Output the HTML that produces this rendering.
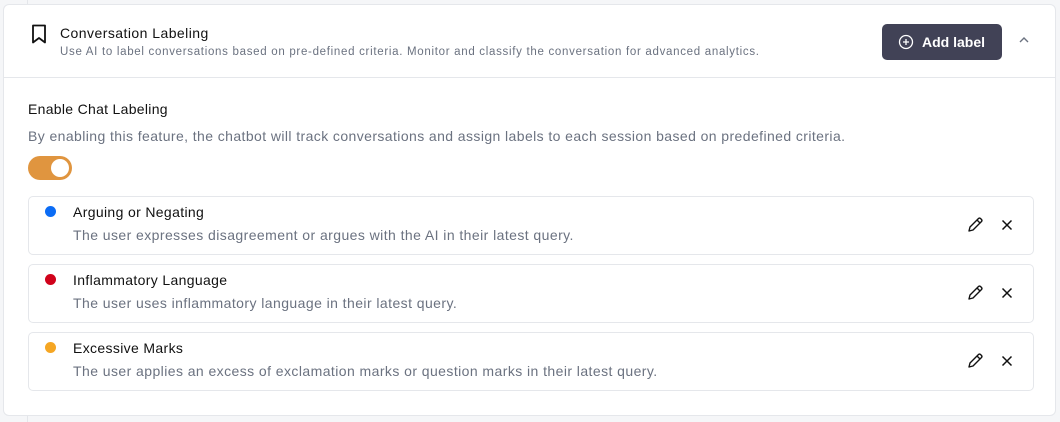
<!DOCTYPE html>
<html><head><meta charset="utf-8"><style>
*{box-sizing:border-box;margin:0;padding:0}
body{width:1060px;height:422px;background:#f5f6f8;font-family:"Liberation Sans",sans-serif;position:relative;overflow:hidden}
.vl{position:absolute;left:27px;top:0;width:1px;height:422px;background:#e4e6ea}
.card{position:absolute;left:3px;top:4px;width:1053px;height:412px;background:#fff;border:1px solid #e5e7eb;border-radius:6px}
.hdr{position:absolute;left:0;top:0;width:100%;height:73px;border-bottom:1px solid #e5e7eb}
.t1{position:absolute;left:56px;top:20px;font-size:14px;color:#111;letter-spacing:0.45px}
.t2{position:absolute;left:56px;top:41px;font-size:11.5px;color:#6b7280;letter-spacing:0.7px}
.btn{position:absolute;left:878px;top:19px;width:120px;height:36px;background:#414256;border-radius:5px;color:#fff;font-weight:bold;font-size:14px;line-height:36px;padding-left:40px}
.btn svg{position:absolute;left:16px;top:10px}
.chev{position:absolute;left:1014px;top:31px}
.e1{position:absolute;left:24px;top:96px;font-size:14px;color:#111;letter-spacing:0.3px}
.e2{position:absolute;left:24px;top:123px;font-size:14px;color:#6b7280;letter-spacing:0.41px}
.tog{position:absolute;left:24px;top:151px;width:44px;height:24px;border-radius:12px;background:#e0953f}
.tog:after{content:"";position:absolute;right:3px;top:3px;width:18px;height:18px;border-radius:50%;background:#fff}
.item{position:absolute;left:24px;width:1006px;height:59px;border:1px solid #e5e7eb;border-radius:5px}
.dot{position:absolute;left:16px;top:9px;width:11px;height:11px;border-radius:50%}
.it{position:absolute;left:44px;top:7px;font-size:14px;color:#111;letter-spacing:0.35px}
.id{position:absolute;left:44px;top:30px;font-size:14px;color:#6b7280;letter-spacing:0.43px}
.ic{position:absolute;top:19px}
</style></head><body>
<div class="vl"></div>
<div class="card">
 <div class="hdr">
  <svg style="position:absolute;left:27px;top:19px" width="16" height="20" viewBox="0 0 16 20"><path d="M2 1.5h12v17l-6-4.5-6 4.5z" fill="none" stroke="#111" stroke-width="1.8" stroke-linejoin="round"/></svg>
  <div class="t1">Conversation Labeling</div>
  <div class="t2">Use AI to label conversations based on pre-defined criteria. Monitor and classify the conversation for advanced analytics.</div>
  <div class="btn"><svg width="16" height="16" viewBox="0 0 16 16"><circle cx="8" cy="8" r="6.5" fill="none" stroke="#fff" stroke-width="1.3"/><path d="M8 5v6M5 8h6" stroke="#fff" stroke-width="1.3"/></svg>Add label</div>
  <svg class="chev" width="12" height="8" viewBox="0 0 12 8"><path d="M2 6l4-4 4 4" fill="none" stroke="#6b7280" stroke-width="1.4"/></svg>
 </div>
 <div class="e1">Enable Chat Labeling</div>
 <div class="e2">By enabling this feature, the chatbot will track conversations and assign labels to each session based on predefined criteria.</div>
 <div class="tog"></div>
 <div class="item" style="top:191px"><div class="dot" style="background:#0b6cf5"></div><div class="it">Arguing or Negating</div><div class="id">The user expresses disagreement or argues with the AI in their latest query.</div>
  <svg class="ic" style="left:937px" width="18" height="18" viewBox="0 0 18 18"><path d="M3 15l1-4L12.5 2.5a1.5 1.5 0 0 1 2 0l1 1a1.5 1.5 0 0 1 0 2L7 14z M11 4l3 3" fill="none" stroke="#111" stroke-width="1.4" stroke-linejoin="round"/></svg>
  <svg class="ic" style="left:969px" width="18" height="18" viewBox="0 0 18 18"><path d="M4.5 4.5l9 9M13.5 4.5l-9 9" stroke="#111" stroke-width="1.5"/></svg></div>
 <div class="item" style="top:259px"><div class="dot" style="background:#d0021b"></div><div class="it">Inflammatory Language</div><div class="id">The user uses inflammatory language in their latest query.</div>
  <svg class="ic" style="left:937px" width="18" height="18" viewBox="0 0 18 18"><path d="M3 15l1-4L12.5 2.5a1.5 1.5 0 0 1 2 0l1 1a1.5 1.5 0 0 1 0 2L7 14z M11 4l3 3" fill="none" stroke="#111" stroke-width="1.4" stroke-linejoin="round"/></svg>
  <svg class="ic" style="left:969px" width="18" height="18" viewBox="0 0 18 18"><path d="M4.5 4.5l9 9M13.5 4.5l-9 9" stroke="#111" stroke-width="1.5"/></svg></div>
 <div class="item" style="top:327px"><div class="dot" style="background:#f5a623"></div><div class="it">Excessive Marks</div><div class="id">The user applies an excess of exclamation marks or question marks in their latest query.</div>
  <svg class="ic" style="left:937px" width="18" height="18" viewBox="0 0 18 18"><path d="M3 15l1-4L12.5 2.5a1.5 1.5 0 0 1 2 0l1 1a1.5 1.5 0 0 1 0 2L7 14z M11 4l3 3" fill="none" stroke="#111" stroke-width="1.4" stroke-linejoin="round"/></svg>
  <svg class="ic" style="left:969px" width="18" height="18" viewBox="0 0 18 18"><path d="M4.5 4.5l9 9M13.5 4.5l-9 9" stroke="#111" stroke-width="1.5"/></svg></div>
</div>
</body></html>
